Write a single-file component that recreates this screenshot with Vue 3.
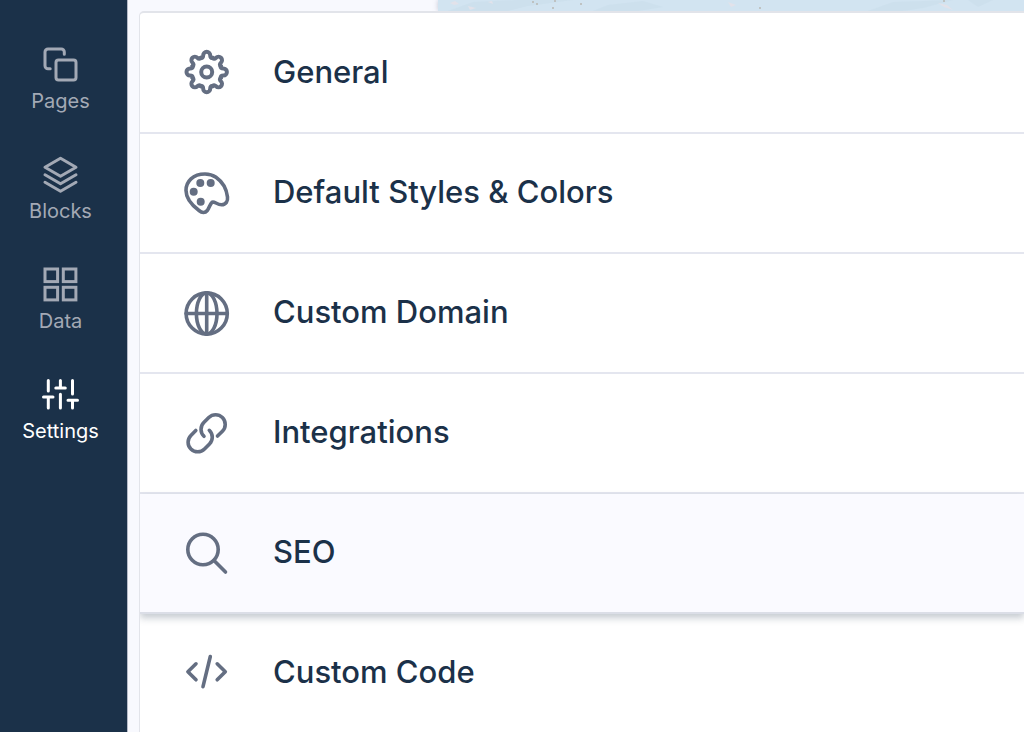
<script setup>
import { ref } from 'vue'

const navItems = [
  { id: 'pages', label: 'Pages' },
  { id: 'blocks', label: 'Blocks' },
  { id: 'data', label: 'Data' },
  { id: 'settings', label: 'Settings' },
]
const sections = [
  { id: 'general', label: 'General' },
  { id: 'styles', label: 'Default Styles & Colors' },
  { id: 'domain', label: 'Custom Domain' },
  { id: 'integrations', label: 'Integrations' },
  { id: 'seo', label: 'SEO' },
  { id: 'code', label: 'Custom Code' },
]
const currentNav = ref('settings')
const currentSection = ref('seo')
const toothAngles = [0, 45, 90, 135, 180, 225, 270, 315]
</script>

<template>
  <div class="app">
    <nav class="sidebar" aria-label="Main">
      <a
        v-for="item in navItems"
        :key="item.id"
        :href="'#' + item.id"
        class="nav-item"
        :class="{ active: item.id === currentNav }"
        @click="currentNav = item.id"
      >
        <svg class="nav-icon" viewBox="0 0 37 37" aria-hidden="true">
          <g v-if="item.id === 'pages'">
            <rect x="14" y="14" width="20" height="20" rx="2.5" />
            <path d="M8.2 22.8H6A3 3 0 0 1 3 19.8V6A3 3 0 0 1 6 3h13.300a3 3 0 0 1 3 3v2.200" />
          </g>
          <g v-else-if="item.id === 'blocks'">
            <path d="M18.500 2.200L34 11.200 18.500 20.200 3 11.200z" />
            <path d="M3 18.700l15.500 9 15.500-9" />
            <path d="M3 26.200l15.500 9 15.500-9" />
          </g>
          <g v-else-if="item.id === 'data'" class="square">
            <rect x="3" y="3" width="12.600" height="12.600" />
            <rect x="21.300" y="3" width="12.600" height="12.600" />
            <rect x="3" y="21.300" width="12.600" height="12.600" />
            <rect x="21.300" y="21.300" width="12.600" height="12.600" />
          </g>
          <g v-else>
            <path d="M6.300 4.400V15M1.500 21h9.500M6.300 21v11M18.400 4.400v7.500M13.800 12h9.500M18.400 18.300V32M30.500 4.400V18M26 24.200h9.500M30.500 24.200V32" />
          </g>
        </svg>
        <span>{{ item.label }}</span>
      </a>
    </nav>

    <main class="content">
      <div class="preview" aria-hidden="true">
        <svg viewBox="0 0 586 11" preserveAspectRatio="xMinYMin slice">
          <g fill="#cadeeb" opacity=".6">
            <path d="M10 11L35 2 80 0h55L90 6 70 11zM170 5l35-4 20 6-25 4h-45zM430 11l25-9 60-2-30 8-20 3zM530 0h25l-15 7z" />
          </g>
          <g fill="#e2e2ea">
            <path d="M12 3l5-2 4 3-5 1zM30 6l8 2-6 2zM50 2l4-1 1 3zM290 2l8 3-5 2zM500 3l9 2 6 5-9-3z" />
          </g>
          <g fill="#b9b8b3">
            <circle cx="95" cy="2" r="1" /><circle cx="99" cy="4" r="1" />
            <circle cx="117" cy="1" r="1" /><circle cx="115" cy="8" r="1" />
            <circle cx="143" cy="4" r="1" /><circle cx="322" cy="8" r="1" />
            <circle cx="506" cy="1" r="1" />
          </g>
        </svg>
      </div>

      <div class="panel">
        <button
          v-for="section in sections"
          :key="section.id"
          type="button"
          class="row"
          :class="{ selected: section.id === currentSection }"
          @click="currentSection = section.id"
        >
          <svg class="row-icon" viewBox="0 0 48 48" aria-hidden="true">
            <g v-if="section.id === 'general'" class="gear">
              <path
                v-for="angle in toothAngles"
                :key="angle"
                :transform="`translate(23.7 23) rotate(${angle})`"
                d="M-5.900-14.200C-4.300-13.600-3.500-14.800-3.500-16.700A3.500 3.500 0 0 1 3.500-16.700C3.500-14.800 4.300-13.600 5.900-14.200"
              />
              <circle cx="23.700" cy="23" r="5.500" />
            </g>
            <g v-else-if="section.id === 'styles'">
              <path d="M22 5C10 5 3 12.500 3 21.500C3 30 10 37 16 41.500C19 44 22 44.300 24.300 41.500C26.500 38.500 27 35 29 33.300C31 31.800 34 35.700 38.500 35.700C43 35.700 45 32 44.500 28C43.500 20 39 12.500 33 8.300C30 6.200 26 5 22 5Z" />
              <g class="solid">
                <circle cx="17.300" cy="14" r="4" /><circle cx="27.700" cy="14" r="4" />
                <circle cx="10.700" cy="22.800" r="4" /><circle cx="17.700" cy="32.700" r="4" />
              </g>
            </g>
            <g v-else-if="section.id === 'domain'">
              <circle cx="23.700" cy="24.500" r="20.600" />
              <ellipse cx="23.700" cy="24.500" rx="10.300" ry="20.600" />
              <path d="M23.700 3.900v41.200M3.100 24.500h41.200" />
            </g>
            <g v-else-if="section.id === 'integrations'">
              <path d="M34.500 27.100L39.400 22.200A9.600 9.600 0 0 0 25.800 8.600L20.800 13.600A9.600 9.600 0 0 0 21 27.300" />
              <path d="M12.800 21.500L7.900 26.400A9.600 9.600 0 0 0 21.500 40L26.500 35A9.600 9.600 0 0 0 26.300 21.300" />
            </g>
            <g v-else-if="section.id === 'seo'">
              <circle cx="20" cy="20.500" r="15.200" />
              <path d="M31 31.500l11.500 11.500" />
            </g>
            <g v-else>
              <path d="M13 14.800L4.900 22.700 13 30.800M34.200 14.800L42.300 22.700 34.200 30.800M27.300 7.500L20 37.700" />
            </g>
          </svg>
          <span class="row-label">{{ section.label }}</span>
        </button>
      </div>
    </main>
  </div>
</template>

<style>
html,
body {
  margin: 0;
  background: #f8f9fe;
}
</style>

<style scoped>
.app {
  display: flex;
  height: 100vh;
  overflow: hidden;
  background: #f8f9fe;
  font-family: Inter, "Liberation Sans", sans-serif;
}

.sidebar {
  box-sizing: border-box;
  flex: 0 0 128px;
  display: flex;
  flex-direction: column;
  gap: 43px;
  padding: 46px 6px 0 0;
  background: #1b3149;
  border-right: 1px solid #b6bac8;
}

.nav-item {
  display: flex;
  flex-direction: column;
  align-items: center;
  gap: 6px;
  color: #a3a9b5;
  font-size: 20px;
  line-height: 24px;
  text-decoration: none;
}

.nav-item.active {
  color: #fff;
}

.nav-icon {
  width: 37px;
  height: 37px;
  fill: none;
  stroke: currentColor;
  stroke-width: 3;
  stroke-linecap: round;
  stroke-linejoin: round;
}

.square {
  stroke-linejoin: miter;
}

.content {
  flex: 1;
  min-width: 0;
  display: flex;
  flex-direction: column;
  padding-left: 11px;
}

.preview {
  flex: 0 0 11px;
  margin-left: 299px;
  background: #d2e4f1;
  box-shadow: 0 0 5px #9a9bb088;
}

.preview svg {
  display: block;
  width: 100%;
  height: 11px;
}

.panel {
  position: relative;
  flex: 1 0 auto;
  padding-top: 1px;
  overflow: hidden;
  background: #fff;
  border: solid #e2e4ea;
  border-width: 2px 0 0 1px;
  border-radius: 5px 0 0 0;
}

.row {
  box-sizing: border-box;
  display: flex;
  align-items: center;
  gap: 42px;
  width: 100%;
  height: 120px;
  padding: 0 43px;
  border: 0;
  border-bottom: 2px solid #e4e6ef;
  background: none;
  color: #1b3149;
  font: 500 31px/40px Inter, "Liberation Sans", sans-serif;
  text-align: left;
  white-space: nowrap;
}

.row:last-child {
  border-bottom-color: transparent;
}

.row.selected {
  background: #fafaff;
  border-bottom-color: #dbdee7;
  box-shadow: 0 4px 7px #1b314940;
}

.row-icon {
  flex: none;
  width: 48px;
  height: 48px;
  fill: none;
  stroke: #646e82;
  stroke-width: 3.6px;
  stroke-linecap: round;
  stroke-linejoin: round;
}

.gear {
  stroke-width: 4px;
}

.solid {
  fill: #646e82;
  stroke: none;
}

.row-label {
  padding-bottom: 2px;
}
</style>
